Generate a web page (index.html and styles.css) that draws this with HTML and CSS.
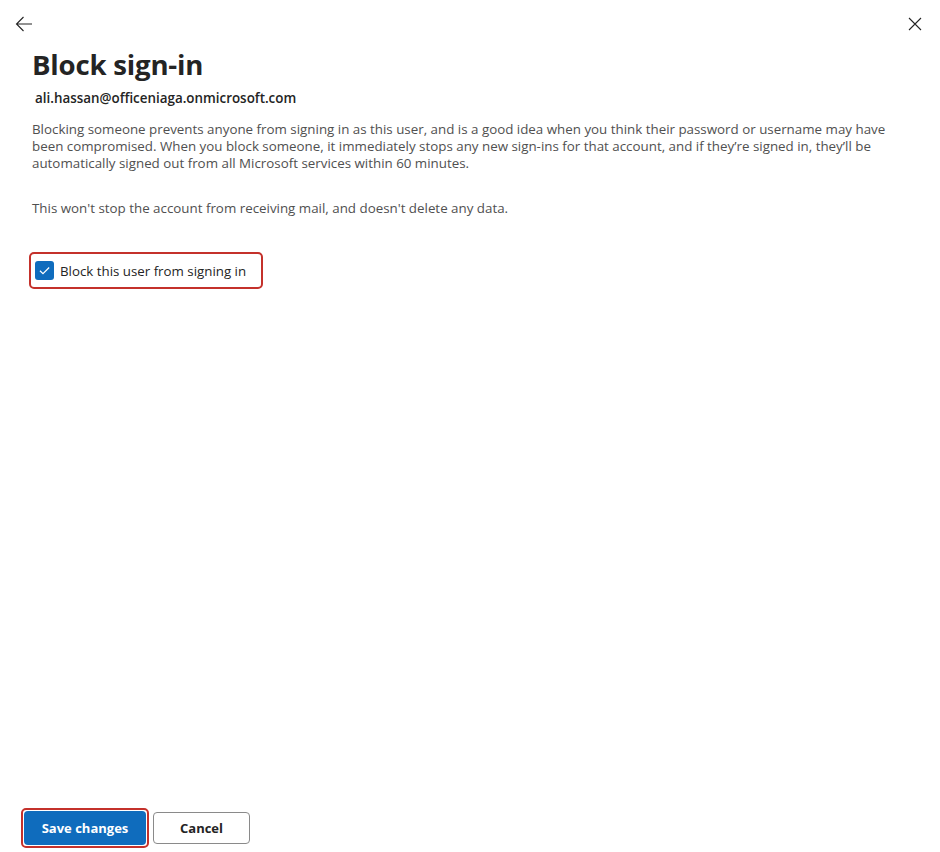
FILE: index.html
```html
<!DOCTYPE html>
<html lang="en">
<head>
  <meta charset="UTF-8">
  <meta name="viewport" content="width=device-width, initial-scale=1.0">
  <title>Block sign-in</title>
  <link rel="stylesheet" href="styles.css">
</head>
<body>
  <div class="panel">
    <!-- Top bar -->
    <div class="top-bar">
      <span class="icon-btn" title="Back">
        <svg width="18" height="18" viewBox="0 0 18 18">
          <path d="M17 9H1.5M8.5 2L1.5 9l7 7" fill="none" stroke="#242424" stroke-width="1.1"/>
        </svg>
      </span>
      <span class="icon-btn" title="Close">
        <svg width="14" height="14" viewBox="0 0 14 14">
          <path d="M1 1l12 12M13 1L1 13" fill="none" stroke="#242424" stroke-width="1.1"/>
        </svg>
      </span>
    </div>

    <!-- Content -->
    <div class="content">
      <h1 class="title">Block sign-in</h1>
      <div class="user-email">ali.hassan@officeniaga.onmicrosoft.com</div>
      <p class="desc">Blocking someone prevents anyone from signing in as this user, and is a good idea when you think their password or username may have been compromised. When you block someone, it immediately stops any new sign-ins for that account, and if they’re signed in, they’ll be automatically signed out from all Microsoft services within 60 minutes.</p>
      <p class="desc">This won't stop the account from receiving mail, and doesn't delete any data.</p>

      <label class="check-row highlight">
        <span class="checkbox">
          <svg width="13" height="13" viewBox="0 0 12 12">
            <path d="M1.8 6.2l2.8 2.8L10.3 3.2" fill="none" stroke="#fff" stroke-width="1.1"/>
          </svg>
        </span>
        <span class="check-label">Block this user from signing in</span>
      </label>
    </div>

    <!-- Footer -->
    <div class="footer">
      <span class="highlight btn-wrap"><button class="btn primary">Save changes</button></span>
      <button class="btn">Cancel</button>
    </div>
  </div>
</body>
</html>
```

FILE: styles.css
```css
/* General Styling */
body {
  font-family: "Open Sans", "Noto Sans", Arial, sans-serif;
  margin: 0;
  background-color: #ffffff;
  color: #242424;
}

h1, p {
  margin: 0;
}

.panel {
  display: flex;
  flex-direction: column;
  height: 100vh;
  box-sizing: border-box;
}

/* Top bar */
.top-bar {
  display: flex;
  justify-content: space-between;
  align-items: center;
  padding: 15px 18px 0 15px;
  height: 18px;
}

.icon-btn {
  display: flex;
  align-items: center;
  justify-content: center;
  cursor: pointer;
}

/* Content */
.content {
  flex: 1;
  padding: 13px 40px 0 32px;
}

.title {
  font-size: 27.6px;
  font-weight: 700;
  line-height: 36px;
  color: #242424;
  letter-spacing: -0.2px;
}

.user-email {
  font-size: 13.4px;
  font-weight: 600;
  line-height: 18px;
  margin: 7px 0 0 3px;
  color: #242424;
}

.desc {
  font-size: 13.35px;
  line-height: 17px;
  color: #505050;
  margin-top: 14px;
}

.desc + .desc {
  margin-top: 28px;
}

.highlight {
  border: 2px solid #c4312b;
  border-radius: 5px;
}

.check-row {
  display: inline-flex;
  align-items: center;
  gap: 6px;
  margin-top: 35px;
  margin-left: -3px;
  padding: 2px 15px 2px 4px;
  height: 29px;
  cursor: pointer;
}

.checkbox {
  width: 19px;
  height: 19px;
  border-radius: 3px;
  background-color: #0f6cbd;
  display: flex;
  align-items: center;
  justify-content: center;
}

.check-label {
  font-size: 13.3px;
  color: #242424;
}

/* Footer */
.footer {
  display: flex;
  align-items: center;
  gap: 4px;
  padding: 0 0 4px 21px;
}

.btn-wrap {
  display: flex;
  padding: 1px;
}

.btn {
  font-family: inherit;
  font-size: 13px;
  font-weight: 700;
  height: 32px;
  padding: 0 26px;
  border: 1px solid #8a8a8a;
  border-radius: 4px;
  background-color: #ffffff;
  color: #242424;
  cursor: pointer;
}

.btn.primary {
  height: 34px;
  width: 122px;
  padding: 0;
  border: none;
  background-color: #0f6cbd;
  color: #ffffff;
}
```
